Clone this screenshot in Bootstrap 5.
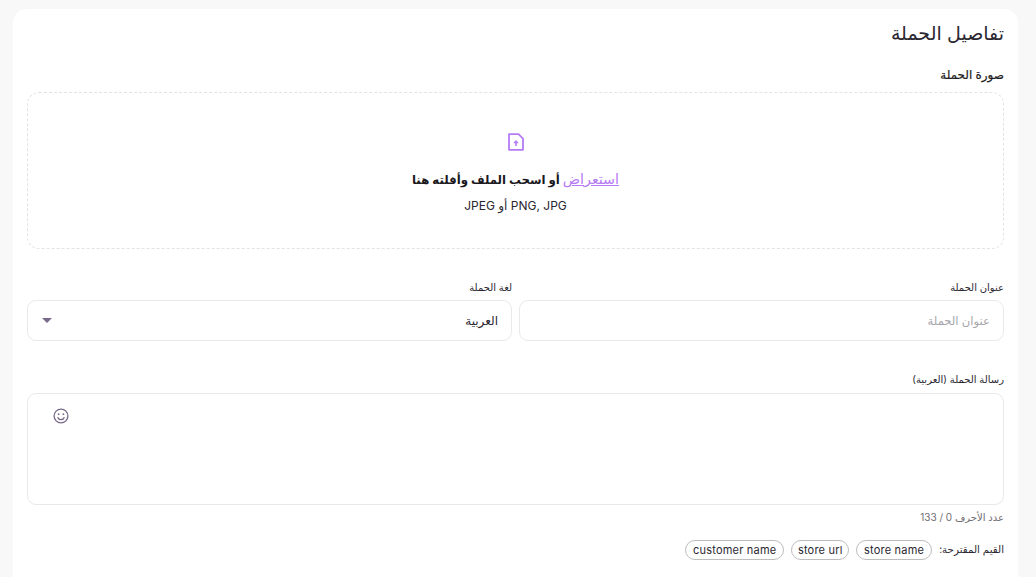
<!DOCTYPE html>
<html lang="ar" dir="rtl">
<head>
<meta charset="utf-8">
<title>تفاصيل الحملة</title>
<link href="https://cdn.jsdelivr.net/npm/bootstrap@5.3.0/dist/css/bootstrap.min.css" rel="stylesheet">
<style>
html,body{height:577px;overflow:hidden}
body{background:#f8f8f8;font-family:Inter,"Noto Sans","DejaVu Sans",sans-serif;color:#1d1b20}
.panel{margin:9px 18px 0 13px;background:#fff;border:0;border-radius:14px 14px 0 0;padding:14px;height:568px;overflow:hidden}
.panel-title{font-size:19px;font-weight:400;line-height:24px;margin:-1px 0 20px;color:#2a2730}
.img-label{display:block;font-size:12px;font-weight:500;line-height:18px;margin-bottom:8px;-webkit-text-stroke:.2px #1d1b20}
.drop{flex:none;height:157px;border:1px dashed #e3e3e6;border-radius:12px;padding-top:40px}
.drop svg{display:block;margin-bottom:18px}
.drop-main{font-size:11.75px;font-weight:600;line-height:20px;color:#1a181d;margin-bottom:7px}
.drop-main a{color:#b57bf5;font-weight:400;font-size:14.3px}
.drop-sub{font-size:12px;line-height:18px;color:#2a2730}
.fields{flex:none;margin-top:30px;--bs-gutter-x:7px}
.fld-label{display:block;font-size:10px;line-height:16px;margin-bottom:6px;color:#2a2730}
.fields .fld-label{margin-bottom:5px}
.fld{height:41px;border:1px solid #e9e9ec;border-radius:9px;font-size:12px;padding:0 13px;box-shadow:none;color:#2a2730}
.fld::placeholder{color:#a7a5ab;font-size:11.6px}
.fld-select{background-image:url("data:image/svg+xml,%3Csvg xmlns='http://www.w3.org/2000/svg' width='10' height='5'%3E%3Cpath d='M0 0h10L5 5z' fill='%23776a88'/%3E%3C/svg%3E");background-position:left 14px center;background-size:10px 5px;padding:0 13px 0 30px}
.msg{flex:none;margin-top:30px}
.msg-wrap{position:relative}
.msg-area{display:block;height:112px;border:1px solid #e9e9ec;border-radius:9px;resize:none;box-shadow:none}
.smile{position:absolute;left:26px;top:15px}
.counter{font-size:10px;line-height:16px;color:#6f6d73;margin-top:4px}
.chips{flex:none;margin-top:15px;font-size:10.3px;gap:7px}
.chip{font-size:11px;line-height:14px;padding:2px 7px;border:1px solid #bdbdbd;border-radius:11px;background:#fff;color:#2a2730;letter-spacing:.2px}
.chip-tight{padding:2px 5.5px}
.chips-label{color:#2a2730}
</style>
</head>
<body>
<div class="card panel">
  <h5 class="panel-title">تفاصيل الحملة</h5>
  <label class="img-label">صورة الحملة</label>
  <div class="drop d-flex flex-column align-items-center text-center">
    <svg width="18" height="18" viewBox="0 0 18 18" fill="none" stroke="#b57bf5" stroke-width="1.8" stroke-linejoin="round"><path d="M2 1.2h9.5L16 5.7v11.1H2z"/><path d="M9 13V9.5" stroke-width="1.6"/><path d="M6.2 10.2 9 7l2.8 3.2z" fill="#b57bf5" stroke="none"/></svg>
    <div class="drop-main"><a href="#">استعراض</a> أو اسحب الملف وأفلته هنا</div>
    <div class="drop-sub">PNG, JPG أو JPEG</div>
  </div>
  <div class="row fields">
    <div class="col-6">
      <label class="fld-label">عنوان الحملة</label>
      <input class="form-control fld" type="text" placeholder="عنوان الحملة">
    </div>
    <div class="col-6">
      <label class="fld-label">لغة الحملة</label>
      <select class="form-select fld fld-select"><option>العربية</option></select>
    </div>
  </div>
  <div class="msg">
    <label class="fld-label">رسالة الحملة (العربية)</label>
    <div class="msg-wrap">
      <textarea class="form-control msg-area"></textarea>
      <svg class="smile" width="16" height="16" viewBox="0 0 16 16" fill="none" stroke="#776a88" stroke-width="1.3"><circle cx="8" cy="8" r="6.9"/><circle cx="5.6" cy="6.2" r=".9" fill="#776a88" stroke="none"/><circle cx="10.4" cy="6.2" r=".9" fill="#776a88" stroke="none"/><path d="M4.6 9.2c.7 1.7 2 2.5 3.4 2.5s2.7-.8 3.4-2.5"/></svg>
    </div>
    <div class="counter">عدد الأحرف 0 / 133</div>
  </div>
  <div class="chips d-flex align-items-center">
    <span class="chips-label">القيم المقترحة:</span>
    <span class="chip">store name</span>
    <span class="chip chip-tight">store url</span>
    <span class="chip">customer name</span>
  </div>
</div>
<script src="https://cdn.jsdelivr.net/npm/bootstrap@5.3.0/dist/js/bootstrap.bundle.min.js"></script>
</body>
</html>
